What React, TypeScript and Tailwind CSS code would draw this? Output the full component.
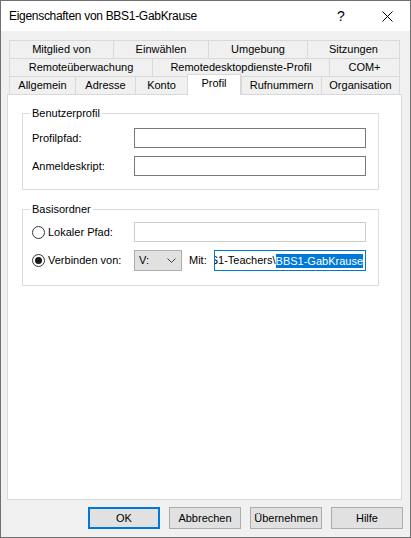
import { useState } from 'react';

type Tab = { label: string; w: string };

const rows: Tab[][] = [
  [
    { label: 'Mitglied von', w: 'w-[104px]' },
    { label: 'Einwählen', w: 'w-[95px]' },
    { label: 'Umgebung', w: 'w-[99px]' },
    { label: 'Sitzungen', w: 'w-[93px]' },
  ],
  [
    { label: 'Remoteüberwachung', w: 'w-[143px]' },
    { label: 'Remotedesktopdienste-Profil', w: 'w-[177px]' },
    { label: 'COM+', w: 'w-[71px]' },
  ],
  [
    { label: 'Allgemein', w: 'w-[66px]' },
    { label: 'Adresse', w: 'w-[60px]' },
    { label: 'Konto', w: 'w-[52px]' },
    { label: 'Profil', w: 'w-[54px]' },
    { label: 'Rufnummern', w: 'w-[80px]' },
    { label: 'Organisation', w: 'w-[79px]' },
  ],
];

function Radio({ checked }: { checked?: boolean }) {
  return (
    <span className="w-[13px] h-[13px] rounded-full border border-[#333333] bg-white flex items-center justify-center shrink-0">
      {checked && <span className="w-[7px] h-[7px] rounded-full bg-[#1a1a1a]" />}
    </span>
  );
}

function GroupBox({ title, className, children }: { title: string; className?: string; children: React.ReactNode }) {
  return (
    <div className={`relative w-[357px] border border-[#dcdcdc] pl-[9px] ${className ?? ''}`}>
      <span className="absolute -top-[8px] left-[7px] bg-white px-[2px] leading-[14px]">{title}</span>
      {children}
    </div>
  );
}

export default function App() {
  const [active] = useState('Profil');

  return (
    <div className="w-[411px] h-[538px] bg-[#f0f0f0] border border-[#707070] flex flex-col overflow-hidden text-[11px] text-black font-['Liberation_Sans',Arial,sans-serif]">
      {/* Title bar */}
      <div className="h-[30px] bg-white flex items-center justify-between shrink-0">
        <span className="pl-[8px] text-[12px] tracking-[-0.3px] text-black">Eigenschaften von BBS1-GabKrause</span>
        <div className="flex h-full">
          <div className="w-[46px] h-full flex items-center justify-center text-[14px]">?</div>
          <div className="w-[46px] h-full flex items-center justify-center">
            <svg width="11" height="11" viewBox="0 0 11 11">
              <path d="M0.5 0.5 L10.5 10.5 M10.5 0.5 L0.5 10.5" stroke="#000" strokeWidth="1" fill="none" />
            </svg>
          </div>
        </div>
      </div>

      {/* Tabs */}
      <div className="mt-[9px] ml-[8px] flex flex-col">
        {rows.map((row, i) => (
          <div key={i} className="flex h-[18px] items-end">
            {row.map((t, j) => {
              const isActive = t.label === active;
              return (
                <div
                  key={t.label}
                  className={`${t.w} flex items-center justify-center border-t border-l border-[#d9d9d9] ${
                    j === row.length - 1 ? 'border-r' : ''
                  } ${
                    isActive
                      ? 'relative top-[1px] z-10 h-[21px] bg-white border-r pb-[3px]'
                      : 'h-[18px] bg-[#f0f0f0]'
                  }`}
                >
                  {t.label}
                </div>
              );
            })}
          </div>
        ))}
      </div>

      {/* Panel */}
      <div className="ml-[6px] w-[395px] h-[406px] border border-[#d9d9d9] bg-white flex flex-col shrink-0">
        <GroupBox title="Benutzerprofil" className="mt-[18px] ml-[14px] pt-[14px] pb-[13px]">
          <div className="flex flex-col gap-[8px]">
            <div className="flex items-center">
              <span className="w-[102px]">Profilpfad:</span>
              <div className="w-[232px] h-[20px] border border-[#7a7a7a] bg-white" />
            </div>
            <div className="flex items-center">
              <span className="w-[102px]">Anmeldeskript:</span>
              <div className="w-[232px] h-[20px] border border-[#7a7a7a] bg-white" />
            </div>
          </div>
        </GroupBox>

        <GroupBox title="Basisordner" className="mt-[19px] ml-[14px] pt-[12px] pb-[14px]">
          <div className="flex flex-col gap-[8px]">
            <div className="flex items-center">
              <div className="w-[102px] flex items-center gap-[3px]">
                <Radio />
                <span>Lokaler Pfad:</span>
              </div>
              <div className="w-[232px] h-[20px] border border-[#cccccc] bg-white" />
            </div>
            <div className="flex items-center">
              <div className="w-[102px] flex items-center gap-[3px]">
                <Radio checked />
                <span>Verbinden von:</span>
              </div>
              <div className="w-[48px] h-[21px] border border-[#adadad] bg-[#e1e1e1] flex items-center justify-between pl-[4px] pr-[5px]">
                <span>V:</span>
                <svg width="9" height="5" viewBox="0 0 9 5">
                  <path d="M0.5 0.5 L4.5 4.5 L8.5 0.5" stroke="#404040" strokeWidth="1" fill="none" />
                </svg>
              </div>
              <span className="ml-[7px] w-[25px]">Mit:</span>
              <div className="w-[152px] h-[21px] border border-[#0078d7] bg-white flex items-center justify-end overflow-hidden pr-[2px]">
                <span className="whitespace-nowrap">S1-Teachers\</span>
                <span className="whitespace-nowrap bg-[#0078d7] text-white leading-[14px]">BBS1-GabKrause</span>
              </div>
            </div>
          </div>
        </GroupBox>
      </div>

      {/* Buttons */}
      <div className="mt-[7px] pr-[7px] flex justify-end gap-[9px]">
        <button className="w-[72px] h-[22px] border-2 border-[#0078d7] bg-[#e1e1e1]">OK</button>
        <button className="w-[72px] h-[22px] border border-[#adadad] bg-[#e1e1e1]">Abbrechen</button>
        <button className="w-[72px] h-[22px] border border-[#adadad] bg-[#e1e1e1]">Übernehmen</button>
        <button className="w-[72px] h-[22px] border border-[#adadad] bg-[#e1e1e1]">Hilfe</button>
      </div>
    </div>
  );
}
